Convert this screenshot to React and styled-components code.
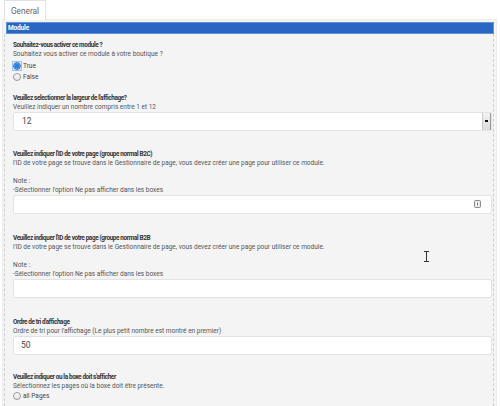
import React from 'react';
import styled, { createGlobalStyle } from 'styled-components';

const GlobalStyle = createGlobalStyle`
  html, body {
    margin: 0;
    padding: 0;
    background: #fff;
  }
  body {
    font-family: Roboto, 'Liberation Sans', Arial, sans-serif;
    color: #333;
  }
`;

const Page = styled.div`
  width: 500px;
  height: 406px;
  overflow: hidden;
  position: relative;
  padding: 0 3px 0 2px;
  box-sizing: border-box;
`;

const Tabs = styled.div`
  display: flex;
  height: 19px;
  padding-left: 2px;
`;

const Tab = styled.div`
  width: 42px;
  height: 20px;
  background: #fff;
  border: 1px solid #e2e2e2;
  border-bottom: none;
  box-sizing: border-box;
  display: flex;
  align-items: center;
  justify-content: center;
  font-size: 8.3px;
  color: #666;
  position: relative;
  z-index: 1;
`;

const Panel = styled.div`
  background: #f4f4f4;
  border: 1px solid #ececec;
  padding: 2px 2px 0 1px;
  height: 400px;
  box-sizing: border-box;
`;

const Header = styled.div`
  height: 12px;
  margin-left: 2px;
  background: #2967c2;
  border: 1px solid #5f94dc;
  box-sizing: border-box;
  color: #fff;
  font-weight: 700;
  font-size: 6.6px;
  line-height: 10px;
  padding-left: 1px;
  letter-spacing: -0.2px;
`;

const Fieldset = styled.div`
  border-left: 1px dashed #cfcfcf;
  border-right: 1px dashed #cfcfcf;
  padding: 6.5px 1px 0 8px;
  height: 400px;
`;

const Group = styled.div`
  margin-bottom: ${(p) => p.$space}px;
`;

const Label = styled.div`
  font-size: 6.4px;
  font-weight: 700;
  line-height: 9px;
  letter-spacing: -0.38px;
  color: #333;
  white-space: nowrap;
`;

const Help = styled.div`
  font-size: 6.5px;
  line-height: 9px;
  color: #555;
  min-height: 9px;
  white-space: nowrap;
`;

const Radios = styled.div`
  margin-top: 1.5px;
`;

const RadioRow = styled.label`
  display: flex;
  align-items: center;
  height: 11px;
  font-size: 6.5px;
  color: #444;
`;

const RadioBox = styled.span`
  width: 10px;
  height: 10px;
  display: flex;
  align-items: center;
  justify-content: center;
  box-sizing: border-box;
  margin-left: -1px;
  border: 1px solid ${(p) => (p.$focus ? '#9cc3ee' : 'transparent')};
`;

const RadioDot = styled.span`
  width: 8px;
  height: 8px;
  border-radius: 50%;
  box-sizing: border-box;
  border: 1px solid ${(p) => (p.$checked ? '#2e7bd6' : '#9a9a9a')};
  background: ${(p) =>
    p.$checked
      ? 'radial-gradient(circle, #2d7fe0 0 2px, #5aa0ea 2.5px, #8cc0f2 100%)'
      : 'linear-gradient(#fafafa, #e6e6e6)'};
`;

const RadioText = styled.span`
  margin-left: 1px;
`;

const Field = styled.div`
  height: 19px;
  background: #fff;
  border: 1px solid #e3e3e3;
  border-radius: 2px;
  box-sizing: border-box;
  display: flex;
  align-items: center;
  justify-content: space-between;
  padding-left: ${(p) => p.$indent || 0}px;
  font-size: 8.5px;
  color: #444;
`;

const Spinner = styled.div`
  width: 7px;
  height: 17px;
  background: linear-gradient(#f2f2f2, #dcdcdc);
  border-left: 1px solid #c8c8c8;
  border-right: 1px solid #9a9a9a;
  display: flex;
  align-items: center;
  justify-content: center;
  &::after {
    content: '';
    width: 3px;
    height: 1.5px;
    background: #111;
  }
`;

const KeyIcon = styled.svg`
  width: 7px;
  height: 8px;
  margin-right: 10px;
`;

const Cursor = styled.svg`
  position: absolute;
  left: 423px;
  top: 251px;
  width: 7px;
  height: 11px;
`;

const Radio = ({ checked, focus, children }) => (
  <RadioRow>
    <RadioBox $focus={focus}>
      <RadioDot $checked={checked} />
    </RadioBox>
    <RadioText>{children}</RadioText>
  </RadioRow>
);

const PageIdGroup = ({ group, icon }) => (
  <Group $space={20}>
    <Label>Veuillez indiquer l'ID de votre page (groupe normal {group}</Label>
    <Help>
      l'ID de votre page se trouve dans le Gestionnaire de page, vous devez créer une page pour utiliser ce module.
    </Help>
    <Help />
    <Help>Note :</Help>
    <Help>-Sélectionner l'option Ne pas afficher dans les boxes</Help>
    <Field>
      <span />
      {icon && (
        <KeyIcon viewBox="0 0 7 8">
          <rect x="0.5" y="0.5" width="6" height="7" rx="1" fill="#e4e4e4" stroke="#8a8a8a" />
          <rect x="2" y="2" width="3" height="4" fill="#fff" />
          <line x1="3.5" y1="2.5" x2="3.5" y2="5.5" stroke="#666" />
        </KeyIcon>
      )}
    </Field>
  </Group>
);

export default function App() {
  return (
    <>
      <GlobalStyle />
      <Page>
        <Tabs>
          <Tab>General</Tab>
        </Tabs>
        <Panel>
          <Header>Module</Header>
          <Fieldset>
            <Group $space={11.5}>
              <Label>Souhaitez-vous activer ce module ?</Label>
              <Help>Souhaitez vous activer ce module à votre boutique ?</Help>
              <Radios>
                <Radio checked focus>True</Radio>
                <Radio>False</Radio>
              </Radios>
            </Group>

            <Group $space={19}>
              <Label>Veuillez selectionner la largeur de l'affichage?</Label>
              <Help>Veuillez indiquer un nombre compris entre 1 et 12</Help>
              <Field $indent={8}>
                <span>12</span>
                <Spinner />
              </Field>
            </Group>

            <PageIdGroup group="B2C)" icon />
            <PageIdGroup group="B2B" />

            <Group $space={18}>
              <Label>Ordre de tri d'affichage</Label>
              <Help>Ordre de tri pour l'affichage (Le plus petit nombre est montré en premier)</Help>
              <Field $indent={7}>
                <span>50</span>
              </Field>
            </Group>

            <Group $space={0}>
              <Label>Veuillez indiquer ou la boxe doit s'afficher</Label>
              <Help>Sélectionnez les pages où la boxe doit être présente.</Help>
              <Radio>all Pages</Radio>
            </Group>
          </Fieldset>
        </Panel>
        <Cursor viewBox="0 0 7 11">
          <path d="M1 0.5h5M1 10.5h5M3.5 0.5v10" stroke="#333" strokeWidth="1" fill="none" />
        </Cursor>
      </Page>
    </>
  );
}
